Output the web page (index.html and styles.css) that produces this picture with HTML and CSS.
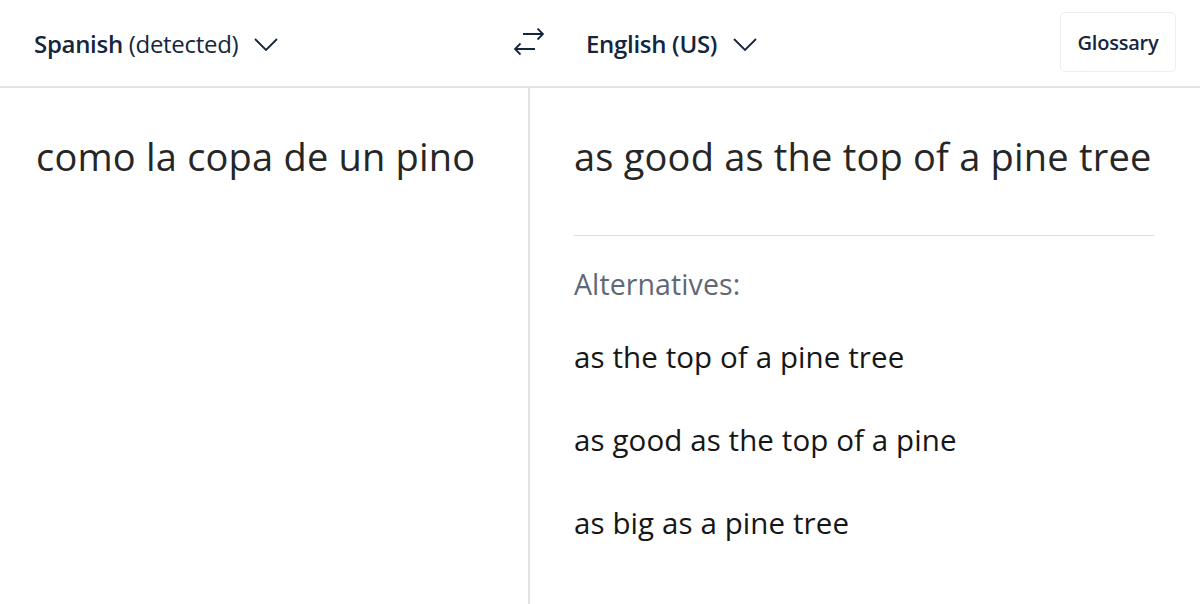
FILE: index.html
```html
<!DOCTYPE html>
<html>
<head>
  <meta charset="utf-8">
  <title>Translator</title>
  <link rel="stylesheet" href="styles.css">
</head>
<body>
  <header class="bar">
    <div class="side left-side">
      <button class="lang"><b>Spanish</b> (detected)<svg class="chev" viewBox="0 0 24 13" width="24" height="13"><path d="M1 1 L12 12 L23 1" fill="none" stroke="currentColor" stroke-width="1.8"/></svg></button>
      <button class="swap" title="Swap">
        <svg viewBox="0 0 30 30" width="30" height="30"><path d="M9 6 H29 M23.5 0.5 L29 6 L23.5 11.5 M1 21 H21 M6.5 15.5 L1 21 L6.5 26.5" fill="none" stroke="currentColor" stroke-width="1.8"/></svg>
      </button>
    </div>
    <div class="side right-side">
      <button class="lang"><b>English (US)</b><svg class="chev" viewBox="0 0 24 13" width="24" height="13"><path d="M1 1 L12 12 L23 1" fill="none" stroke="currentColor" stroke-width="1.8"/></svg></button>
      <button class="glossary">Glossary</button>
    </div>
  </header>
  <main class="panes">
    <section class="pane source">
      <p class="big">como la copa de un pino</p>
    </section>
    <section class="pane target">
      <p class="big">as good as the top of a pine tree</p>
      <hr class="rule">
      <p class="alt-title">Alternatives:</p>
      <ul class="alts">
        <li>as the top of a pine tree</li>
        <li>as good as the top of a pine</li>
        <li>as big as a pine tree</li>
      </ul>
    </section>
  </main>
</body>
</html>
```

FILE: styles.css
```css
body {
  margin: 0;
  background: #fff;
  font-family: "Open Sans", "Noto Sans", sans-serif;
  color: #222;
}

.bar {
  display: flex;
  height: 86px;
  border-bottom: 2px solid #e1e3e6;
}
.side {
  display: flex;
  align-items: center;
}
.left-side {
  width: 530px;
  padding-left: 34px;
  justify-content: space-between;
  box-sizing: border-box;
}
.right-side {
  flex: 1;
  padding-left: 56px;
  padding-right: 24px;
  justify-content: space-between;
}

button {
  font-family: inherit;
  background: none;
  border: none;
  padding: 0;
  color: #14263d;
  cursor: pointer;
}
.lang {
  font-size: 24px;
  letter-spacing: -0.3px;
  white-space: nowrap;
}
.lang b { font-weight: 600; }
.chev {
  margin-left: 16px;
  vertical-align: 2px;
}
.swap {
  width: 30px;
  height: 30px;
  margin-right: -14px;
}
.swap svg { display: block; }
.glossary {
  width: 116px;
  height: 60px;
  margin-top: -2px;
  border: 1px solid #eceef0;
  border-radius: 5px;
  font-size: 20px;
  font-weight: 600;
  letter-spacing: -0.2px;
}

.panes {
  display: flex;
  height: 516px;
}
.pane {
  box-sizing: border-box;
}
.source {
  width: 530px;
  border-right: 2px solid #e1e3e6;
  padding: 44px 36px;
}
.target {
  flex: 1;
  padding: 44px 46px 0 44px;
}
.big {
  margin: 0;
  font-size: 38px;
  line-height: 48px;
  letter-spacing: 0.2px;
  color: #262626;
}
.rule {
  border: none;
  border-top: 1px solid #dcdfe3;
  margin: 55px 0 0 0;
}
.alt-title {
  margin: 30px 0 0 0;
  font-size: 28.5px;
  line-height: 36px;
  letter-spacing: 0.1px;
  color: #5f6876;
}
.alts {
  list-style: none;
  margin: 0;
  padding: 0;
}
.alts li {
  font-size: 29.5px;
  line-height: 36px;
  letter-spacing: 0.1px;
  color: #161616;
  margin-top: 47px;
}
.alts li:first-child { margin-top: 37px; }
```
